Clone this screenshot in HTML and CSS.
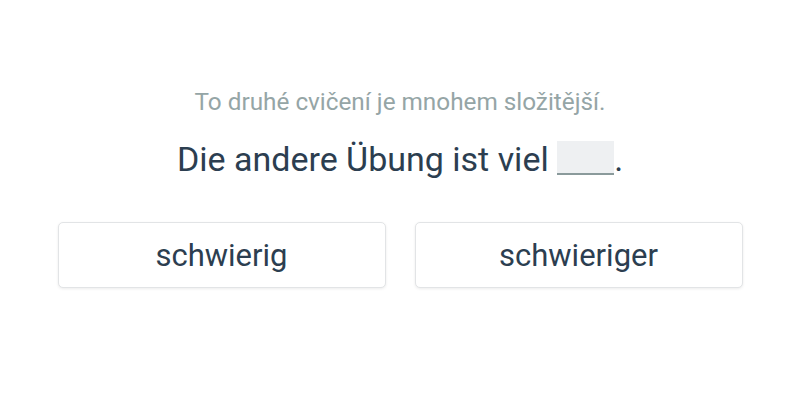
FILE: index.html
```html
<!DOCTYPE html>
<html lang="de">
<head>
<meta charset="utf-8">
<link rel="stylesheet" href="styles.css">
</head>
<body>
<div class="page">
  <p class="hint">To druhé cvičení je mnohem složitější.</p>
  <p class="sentence">Die andere Übung ist viel <span class="blank"></span>.</p>
  <div class="choices">
    <button class="choice">schwierig</button>
    <button class="choice">schwieriger</button>
  </div>
</div>
</body>
</html>
```
FILE: styles.css
```css
html, body {
  margin: 0;
  padding: 0;
  background: #ffffff;
}
body {
  width: 800px;
  height: 400px;
  font-family: Roboto, "Liberation Sans", sans-serif;
}
.page {
  display: flex;
  flex-direction: column;
  align-items: center;
  padding-top: 86px;
}
.hint {
  margin: 0;
  font-size: 24.3px;
  line-height: 32px;
  color: #95a5a6;
}
.sentence {
  margin: 20px 0 0;
  font-size: 34px;
  line-height: 42px;
  color: #2c3e50;
}
.blank {
  display: inline-block;
  width: 57px;
  height: 32px;
  background: #eef0f2;
  border-bottom: 2px solid #8a9a9b;
  vertical-align: -4px;
}
.choices {
  display: flex;
  gap: 29px;
  margin-top: 42px;
}
.choice {
  width: 328px;
  height: 66px;
  background: #ffffff;
  border: 1px solid #e2e4e6;
  border-radius: 5px;
  box-shadow: 0 1px 3px rgba(0, 0, 0, 0.08);
  font-family: Roboto, "Liberation Sans", sans-serif;
  font-size: 31px;
  color: #2c3e50;
  padding: 0;
}
```
